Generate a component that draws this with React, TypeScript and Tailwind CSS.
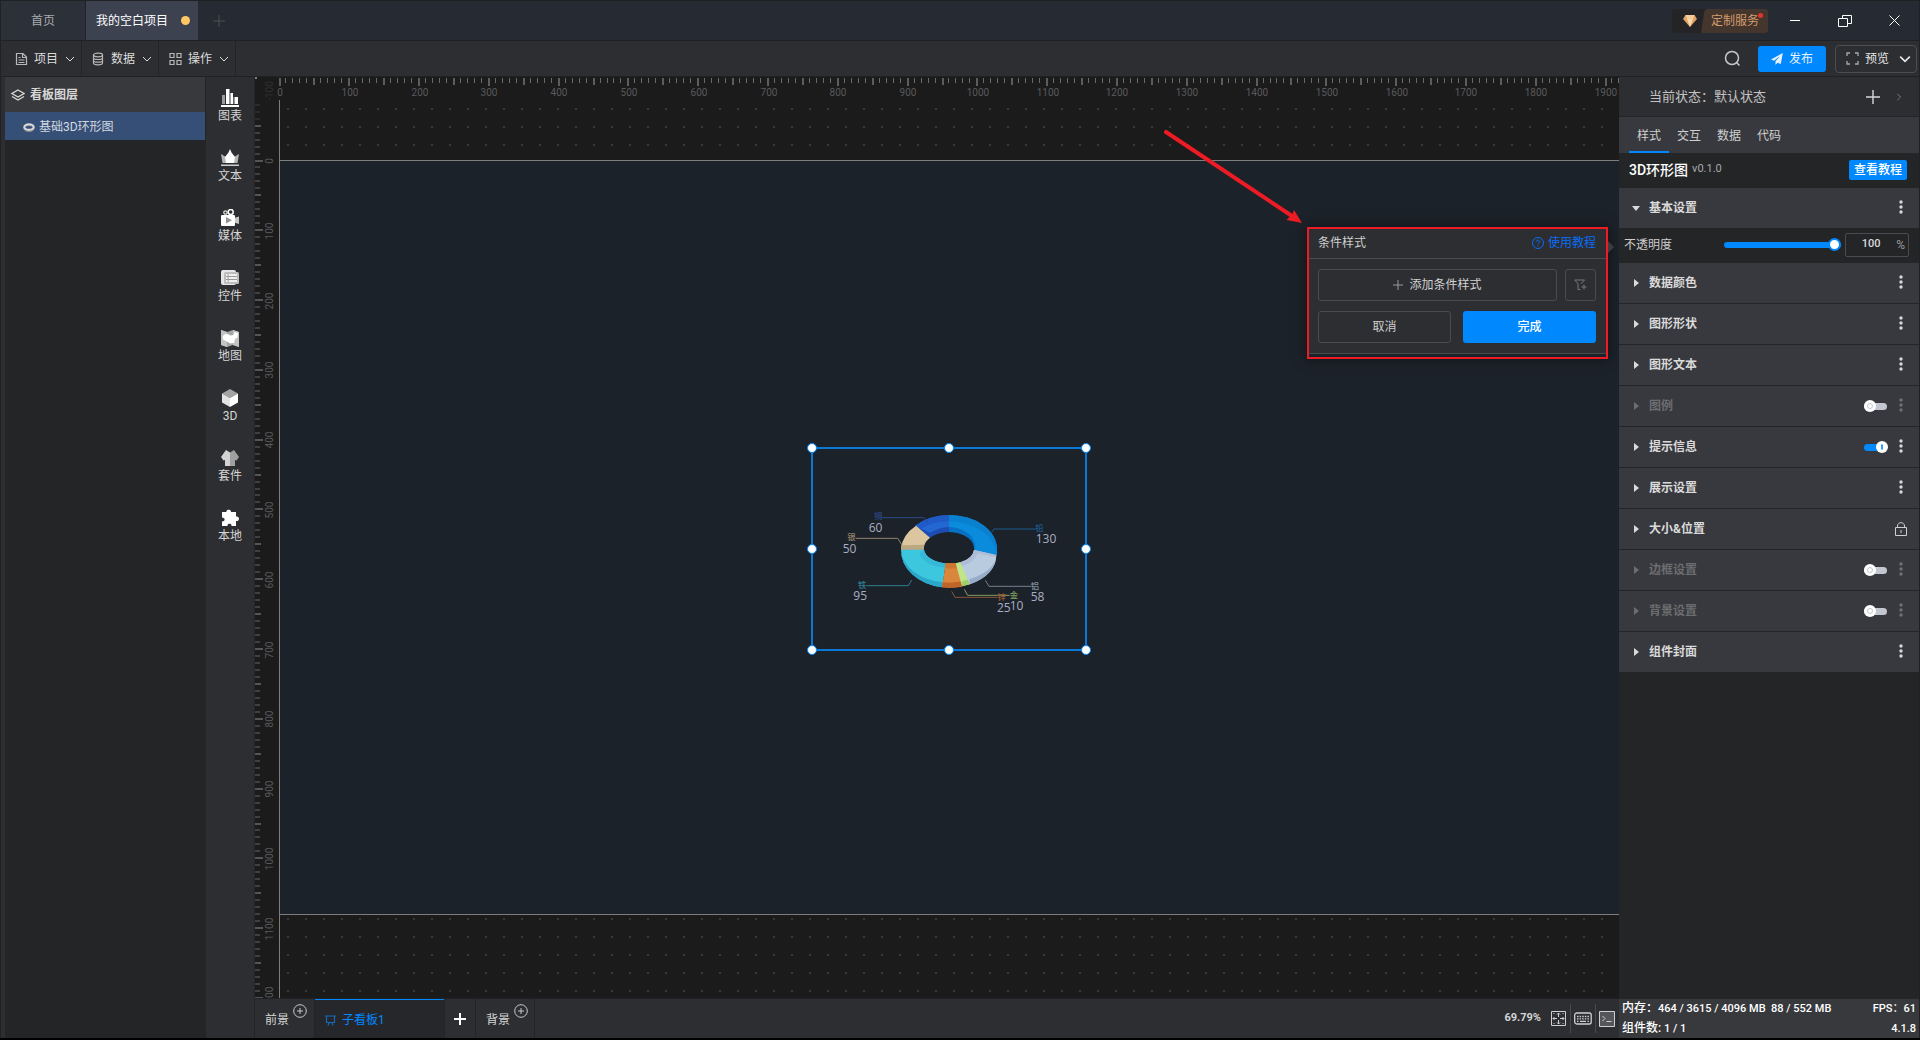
import { useState } from 'react';
import type { ReactNode } from 'react';
import { clsx } from 'clsx';

const STEP = 6.979;

function Chevron({ className, size = 10, width = 1 }: { className?: string; size?: number; width?: number }) {
	return (
		<svg className={className} width={size} height={size} viewBox="0 0 10 10" fill="none" stroke="currentColor" strokeWidth={width}>
			<path d="M1 3l4 4 4-4" />
		</svg>
	);
}

function PlusIcon({ size, width = 1, className }: { size: number; width?: number; className?: string }) {
	return (
		<svg className={className} width={size} height={size} viewBox={`0 0 ${size} ${size}`} stroke="currentColor" strokeWidth={width}>
			<path d={`M0 ${size / 2}H${size}M${size / 2} 0V${size}`} />
		</svg>
	);
}

function TitleBar() {
	return (
		<header className="flex h-10 shrink-0 items-stretch border-t border-[#202124] bg-[#262b33] text-xs">
			<button type="button" className="w-[85px] border-r border-[#202124] bg-[#2c3038] pl-[30px] text-left text-[#a9abae]">
				首页
			</button>
			<button type="button" className="flex w-28 items-center justify-between bg-[#3d4250] pr-2 pl-2.5 text-white">
				我的空白项目
				<span className="size-[9px] rounded-full bg-[#ffc864]" />
			</button>
			<button type="button" aria-label="新建" className="ml-[15px] text-[#4a4e55]">
				<PlusIcon size={12} />
			</button>
			<div className="ml-auto flex items-center">
				<button type="button" className="relative flex h-6 w-24 items-center overflow-hidden rounded-[3px] bg-[#242426]">
					<svg width="36" height="24" viewBox="0 0 36 24">
						<path d="M36 0h-1q-2 0-3 4l-3 20h7z" fill="#45362d" />
						<path d="M13.500 6h9l2.500 4-7 8-7-8z" fill="#dfa468" />
						<path d="M13.500 6h9l-1.500 4h-6z" fill="#f5cb9a" />
						<path d="M15 10h6l-3 8z" fill="#fbd7a9" />
					</svg>
					<span className="h-6 flex-1 bg-[#45362d] pl-[3px] text-left leading-6 text-[#d39c6e]">定制服务</span>
					<span className="absolute top-1 right-[5px] size-[5px] rounded-full bg-[#e03434]" />
				</button>
				<button type="button" aria-label="最小化" className="flex h-10 w-[53px] items-center justify-center text-white">
					<svg width="10" height="12" viewBox="0 0 10 12" stroke="currentColor">
						<path d="M0 5.500h10" />
					</svg>
				</button>
				<button type="button" aria-label="还原" className="flex h-10 w-12 items-center justify-center text-white">
					<svg width="14" height="12" viewBox="0 0 14 12" fill="none" stroke="currentColor">
						<path d="M.5 3.500h9v8h-9zM4.500 3.500v-3h9v8h-4" />
					</svg>
				</button>
				<button type="button" aria-label="关闭" className="flex h-10 w-[50px] items-center justify-center text-white">
					<svg width="11" height="11" viewBox="0 0 11 11" fill="none" stroke="currentColor">
						<path d="M.5.5l10 10M10.500.5l-10 10" />
					</svg>
				</button>
			</div>
		</header>
	);
}

function MenuButton({ label, children }: { label: string; children: ReactNode }) {
	return (
		<button type="button" className="flex w-[77px] items-center border-r border-[#232427] pl-2.5 text-[#dcdcdc]">
			<svg width="13" height="14" viewBox="0 0 13 14" fill="none" stroke="#b8b8b8" strokeWidth="1.200">
				{children}
			</svg>
			<span className="ml-1.5">{label}</span>
			<Chevron className="ml-[7px]" />
		</button>
	);
}

function Toolbar() {
	return (
		<div className="flex h-9 shrink-0 items-stretch border-t border-[#202124] bg-[#2d2e32] pl-1 text-xs">
			<MenuButton label="项目">
				<path d="M1.500 1.500h6.500l3.500 3.500v7.500h-10zM7.500 1.500v4h4M3.500 5.500h2M3.500 8h6M3.500 10.500h6" />
			</MenuButton>
			<MenuButton label="数据">
				<ellipse cx="6" cy="3" rx="4.500" ry="1.800" />
				<path d="M1.500 3v8c0 2.400 9 2.400 9 0V3M1.500 5.700c0 2.400 9 2.400 9 0M1.500 8.400c0 2.400 9 2.400 9 0" />
			</MenuButton>
			<MenuButton label="操作">
				<path d="M1 1.500h4v4H1zM8 1.500h4v4H8zM1 8.500h4v4H1zM8 8.500h4v4H8z" />
			</MenuButton>
			<div className="ml-auto flex items-center pr-0.5">
				<button type="button" aria-label="搜索" className="mr-[17px] text-[#c8c8c8]">
					<svg width="17" height="17" viewBox="0 0 17 17" fill="none" stroke="currentColor" strokeWidth="1.500">
						<circle cx="8" cy="8" r="6.500" />
						<path d="M12.500 12.500l3 3" />
					</svg>
				</button>
				<button type="button" className="flex h-[26px] w-[68px] items-center justify-center gap-1.5 rounded-[3px] bg-[#0088ff] text-[#e6f2ff]">
					<svg width="12" height="12" viewBox="0 0 12 12" fill="currentColor">
						<path d="M11.800 0L0 6.400l3 1.300L9 3 4.500 8.200V12l2-2.300 3.300 1.400z" />
					</svg>
					发布
				</button>
				<button type="button" className="ml-[9px] flex h-7 w-[82px] items-center rounded border border-[#4c4d50] pl-2.5 text-[#e6e6e6]">
					<svg width="13" height="13" viewBox="0 0 13 13" fill="none" stroke="#a9a9a9" strokeWidth="1.300">
						<path d="M1 4V1h3M9 1h3v3M12 9v3H9M4 12H1V9" />
					</svg>
					<span className="ml-1.5">预览</span>
					<Chevron className="ml-2.5" size={12} width={1.4} />
				</button>
			</div>
		</div>
	);
}

function LayerPanel() {
	return (
		<aside className="ml-1 w-[200px] shrink-0 bg-[#242527] text-xs">
			<h2 className="flex h-[35px] items-center bg-[#38393d] pl-1.5 font-bold text-[#d8d8d8]">
				<svg width="14" height="12" viewBox="0 0 14 12" fill="none" stroke="currentColor" strokeWidth="1.300">
					<path d="M7 1l6 3.500-6 3.500-6-3.500zM1 7.500L7 11l6-3.500" />
				</svg>
				<span className="ml-[5px]">看板图层</span>
			</h2>
			<button type="button" className="flex h-7 w-full items-center gap-1 bg-[#364f76] pt-0.5 pl-[18px] text-[#d3d8e0]">
				<svg width="12" height="9" viewBox="0 0 12 9">
					<ellipse cx="6" cy="5" rx="4.700" ry="3" fill="none" stroke="#8d8d92" strokeWidth="2" />
					<ellipse cx="6" cy="4" rx="4.700" ry="2.800" fill="none" stroke="#d8d8dc" strokeWidth="2" />
				</svg>
				<span>基础3D环形图</span>
			</button>
		</aside>
	);
}

const tools: { label: string; icon: ReactNode }[] = [
	{
		label: '图表',
		icon: (
			<>
				<path d="M1 6h3v9H1zM9 4h3v11H9z" fill="#9b9b9b" />
				<path d="M5 0h3.500v15H5zM10 4h2v11h-2zM14 8h3v7h-3z" fill="#fff" />
				<path d="M12.500 8H14v7h-1.500z" fill="#9b9b9b" />
				<path d="M0 16h18v2H0z" fill="#fff" />
			</>
		),
	},
	{
		label: '文本',
		icon: (
			<>
				<path d="M0 5l5 3 8 0 5-3-1.500 9h-15z" fill="#b5b5b5" />
				<path d="M9 0l1.500 3.500L14 8l-1 6H5L4 8l3.500-4.500z" fill="#fff" />
				<path d="M0 15.500h18V17H0z" fill="#cfcfcf" />
			</>
		),
	},
	{
		label: '媒体',
		icon: (
			<>
				<circle cx="4.500" cy="3.500" r="1.700" fill="none" stroke="#ddd" strokeWidth="1.300" />
				<circle cx="9.700" cy="3" r="2.500" fill="none" stroke="#fff" strokeWidth="1.500" />
				<path d="M13 9l5-1.500V15l-5-1.500z" fill="#c5c5c5" />
				<rect y="6" width="14" height="11" rx="1" fill="#fff" />
				<path d="M5 8l6 3.200L5 14.500z" fill="#949494" />
			</>
		),
	},
	{
		label: '控件',
		icon: (
			<>
				<rect x="0" y="1" width="15" height="15" rx="2" fill="#e6e6e6" />
				<rect x="3" y="3" width="15" height="12" rx="1.500" fill="#bdbdbd" />
				<path d="M5 6h1.500M5 9h1.500M5 12h1.500M8 6h8M8 9h8M8 12h8" stroke="#fff" strokeWidth="1.300" />
				<path d="M5 7.500h11M5 10.500h11" stroke="#8b8b8b" strokeWidth=".7" />
			</>
		),
	},
	{
		label: '地图',
		icon: (
			<>
				<path d="M0 1l6 2 6-2 6 2v15l-6-2-6 2-6-2z" fill="#a6a6a6" />
				<path d="M0 1l6 2v15l-6-2zM12 1l6 2v15l-6-2z" fill="#c4c4c4" />
				<path d="M1.500 8l1.500-2.500 4-.5 2.500 1.500 3-.5 1-3 3.500 1-.5 4.500-2.500 1.500-1 4-4 .5-3-2-3.500-1.500z" fill="#fff" />
			</>
		),
	},
	{
		label: '3D',
		icon: (
			<>
				<path d="M9 0l8 4.500L9 9 1 4.500z" fill="#a3a3a3" />
				<path d="M1 4.500L9 9v9l-8-4.500z" fill="#e3e3e3" />
				<path d="M17 4.500L9 9v9l8-4.500z" fill="#fff" />
			</>
		),
	},
	{
		label: '套件',
		icon: (
			<>
				<path d="M5 1l4 2.500V17H4v-6l-1.500.5L0 8z" fill="#d2d2d2" />
				<path d="M13 1L9 3.500V17h5v-6l1.500.5L18 8z" fill="#a0a0a0" />
			</>
		),
	},
	{
		label: '本地',
		icon: (
			<path
				d="M1 3h4.500C4.500 0 10.500 0 10 3h5v4.500c4-1 4 5.500 0 4.500V17h-4.500c.5-3-4.500-3-4 0H1v-4.500c3.500 0 3.500-4 0-4z"
				fill="#fff"
			/>
		),
	},
];

function ToolRail() {
	return (
		<nav className="flex w-[50px] shrink-0 flex-col border-x border-[#242527] bg-[#2d2e32]">
			{tools.map((tool) => (
				<button key={tool.label} type="button" className="flex h-[60px] shrink-0 flex-col items-center pt-3 text-xs leading-[18px] text-[#d5d5d5]">
					<svg width="18" height="18" viewBox="0 0 18 18">
						{tool.icon}
					</svg>
					{tool.label}
				</button>
			))}
		</nav>
	);
}

function range(from: number, to: number) {
	return Array.from({ length: to - from + 1 }, (_, i) => from + i);
}

function TopRuler() {
	return (
		<svg className="h-[23px] w-full overflow-hidden" aria-hidden="true">
			<rect width="2" height="2" fill="#7d7d7e" />
			{range(0, 192).map((i) => {
				const major = i % 10 === 0;
				const mid = i % 5 === 0;
				return (
					<g key={i}>
						<rect
							x={Math.floor(i * STEP) + 24}
							y="1"
							width={mid ? 2 : 1}
							height={major ? 8 : mid ? 7 : 5}
							fill={mid ? '#5c5c5d' : '#6a6a6b'}
						/>
						{major && (
							<text x={Math.round(i * STEP) + 25} y="19" fontSize="10" textAnchor="middle" fill="#5a5a5b">
								{i * 10}
							</text>
						)}
					</g>
				);
			})}
		</svg>
	);
}

function LeftRuler() {
	return (
		<svg className="-mt-[23px] w-6 shrink-0 overflow-hidden" aria-hidden="true">
			{range(-8, 122).map((i) => (
				<rect
					key={i}
					x="0"
					y={Math.floor(i * STEP) + 83}
					width={i % 10 === 0 ? 8 : i % 5 === 0 ? 6 : 5}
					height="2"
					fill={i < -5 ? '#2b2b2c' : i % 5 === 0 ? '#555556' : '#404041'}
				/>
			))}
			{range(-1, 12).map((n) => (
				<text
					key={n}
					transform={`translate(18 ${Math.round(n * 10 * STEP) + 84}) rotate(-90)`}
					fontSize="10"
					textAnchor="middle"
					fill={n < 0 ? '#303031' : '#5a5a5b'}
				>
					{n * 100}
				</text>
			))}
		</svg>
	);
}

function DonutChart() {
	return (
		<svg className="absolute -inset-0.5" width="276" height="204" viewBox="63 51 828 612" role="img" aria-label="3D环形图">
			<g>
				<path d="M477 255A144 102 0 0 1 621 357V375L552 364A75 50 0 0 0 477 306z" fill="#0b8bdb" />
				<path d="M477 255A144 102 0 0 1 621 357L619 373A144 102 0 0 0 477 274z" fill="#0a80d0" />
				<path d="M477 291A82 58 0 0 1 555 350L552 364A75 50 0 0 0 477 306z" fill="#0670c4" />
				<path d="M375 287A144 102 0 0 1 477 255V306A75 50 0 0 0 419 323z" fill="#2367d3" />
				<path d="M380 285A144 102 0 0 1 477 255V274A130 90 0 0 0 392 296z" fill="#205ac7" />
				<path d="M375 287L419 323A75 50 0 0 1 477 306V291A90 60 0 0 0 421 308L380 290z" fill="#1d4cb4" />
				<path d="M333 357A144 102 0 0 1 378 287L420 323A75 50 0 0 0 402 349L401 359H334z" fill="#dcc6a0" />
				<path d="M333 346L403 344 401 359H334z" fill="#bca783" />
				<path d="M333 359H402A75 46 0 0 0 467 400L457 472A144 112 0 0 1 333 359z" fill="#3cc7df" />
				<path d="M333 359A144 102 0 0 0 459 457L456 472A144 112 0 0 1 333 359z" fill="#2ba8c9" />
				<path d="M402 359A75 46 0 0 0 467 400L465 413A85 56 0 0 1 388 372z" fill="#35b9d6" />
				<path d="M467 400H497L517 457 516 470Q486 475 456 472z" fill="#db863d" />
				<path d="M458 457Q488 460 516 454V469Q486 475 456 472z" fill="#c06428" />
				<path d="M467 400H497L501 414Q482 418 465 414z" fill="#cf7730" />
				<path d="M497 400L511 396 540 450 539 463 516 469z" fill="#bfe489" />
				<path d="M516 454L538 448 540 463 516 469z" fill="#9fcf68" />
				<path d="M552 360L619 375Q619 434 539 463L511 397Q548 386 552 360z" fill="#b9cbdf" />
				<path d="M620 372Q618 422 538 448L540 463Q612 438 620 376z" fill="#97acc9" />
				<path d="M552 360L619 375 617 382 562 370Q556 396 517 408L511 397Q548 386 552 360z" fill="#adbdd6" />
			</g>
			<g fill="none" strokeWidth="3">
				<path d="M411 275L402 263H276" stroke="#2b4a85" />
				<path d="M336 345L323 325H197" stroke="#94836b" />
				<path d="M365 450L355 467H229" stroke="#307d92" />
				<path d="M605 306L612 297H738" stroke="#1a5b8f" />
				<path d="M586 451L597 469H723" stroke="#74808f" />
				<path d="M523 478L533 496H659" stroke="#7d9d5e" />
				<path d="M485 484L495 502H622" stroke="#8a5538" />
			</g>
			<g fontSize="25" fontWeight="500">
				<text x="252" y="268" fill="#2b4a85">铜</text>
				<text x="172" y="331" fill="#94836b">银</text>
				<text x="204" y="474" fill="#307d92">铁</text>
				<text x="736" y="303" fill="#1a5b8f">铅</text>
				<text x="722" y="476" fill="#8490a0">铝</text>
				<text x="622" y="509" fill="#a05c35">锌</text>
				<text x="659" y="504" fill="#7d9d5e">金</text>
			</g>
			<g fontSize="36" fill="#a9aec4" className="font-['Open_Sans','Noto_Sans',sans-serif]">
				<text x="236" y="305">60</text>
				<text x="158" y="368">50</text>
				<text x="190" y="510">95</text>
				<text x="737" y="340">130</text>
				<text x="722" y="513">58</text>
				<text x="621" y="546">25</text>
				<text x="659" y="540">10</text>
			</g>
		</svg>
	);
}

const handles = [
	'-left-[6px] -top-[6px]',
	'left-1/2 -ml-[5px] -top-[6px]',
	'-right-[6px] -top-[6px]',
	'-left-[6px] top-1/2 -mt-[5px]',
	'-right-[6px] top-1/2 -mt-[5px]',
	'-left-[6px] -bottom-[6px]',
	'left-1/2 -ml-[5px] -bottom-[6px]',
	'-right-[6px] -bottom-[6px]',
];

function ConditionPopup() {
	return (
		<section className="absolute top-[127px] right-[11px] w-[301px] border-2 border-[#ed1c24] pb-[3px] text-xs shadow-[0_0_12px_rgba(0,0,0,0.5)]">
			<div className="absolute top-3 -right-2 border-y-[6px] border-l-[6px] border-y-transparent border-l-[#3c3d41]" />
			<div className="border-b border-[#4a4b4e] bg-[#2d2e32] pb-2.5">
				<div className="flex h-[30px] items-center justify-between border-b border-[#4a4b4e] pr-2.5 pb-0.5 pl-[9px]">
					<h3 className="text-[#cfcfcf]">条件样式</h3>
					<a href="#help" className="flex items-center gap-1 text-[#0a6cf5]">
						<svg width="12" height="12" viewBox="0 0 12 12" fill="none" stroke="currentColor">
							<circle cx="6" cy="6" r="5.500" />
							<path d="M4.300 4.800C4.300 2.600 7.700 2.600 7.700 4.700 7.700 6 6 5.900 6 7.300M6 8.300v1.100" />
						</svg>
						使用教程
					</a>
				</div>
				<div className="flex flex-col gap-2.5 pt-2.5 pr-2.5 pl-[9px]">
					<div className="flex gap-2">
						<button type="button" className="flex h-8 flex-1 items-center justify-center gap-1.5 rounded-[3px] border border-[#4a4b4e] text-[#d2d2d2]">
							<PlusIcon size={10} className="text-[#9a9a9a]" />
							添加条件样式
						</button>
						<button type="button" aria-label="筛选" className="flex h-8 w-[31px] items-center justify-center rounded-[3px] border border-[#4a4b4e] text-[#77787b]">
							<svg width="13" height="12" viewBox="0 0 13 12" fill="none" stroke="currentColor">
								<path d="M.8 1h9.700L7 4.800M.8 1L4 4.800V10.500h2.500M7.500 8h5M10 5.500v5" />
							</svg>
						</button>
					</div>
					<div className="grid grid-cols-2 gap-3">
						<button type="button" className="h-8 rounded-[3px] border border-[#4a4b4e] text-[#cfcfcf]">
							取消
						</button>
						<button type="button" className="h-8 rounded-[3px] bg-[#0088ff] font-medium text-white">
							完成
						</button>
					</div>
				</div>
			</div>
		</section>
	);
}

function Canvas() {
	return (
		<div className="flex min-h-0 flex-1 flex-col bg-[#1b1b1c]">
			<TopRuler />
			<div className="flex min-h-0 flex-1">
				<LeftRuler />
				<div className="relative flex-1 overflow-hidden border-l border-[#7d7d7e] bg-[radial-gradient(#39393a_1px,transparent_1px)] bg-size-[18px_18px] bg-origin-border">
					<div className="absolute inset-x-0 top-[60px] h-[755px] border-y border-[#7d7d7e] bg-[#1c222a]" />
					<div className="absolute top-[347px] left-[531px] h-[204px] w-[276px] border-2 border-[#0a78d6]">
						<DonutChart />
						{handles.map((place) => (
							<span key={place} className={clsx('absolute size-2.5 rounded-full border border-[#0088ff] bg-white', place)} />
						))}
					</div>
					<svg className="absolute top-[30px] right-[316px]" width="140" height="94" viewBox="0 0 140 94" aria-hidden="true">
						<path d="M3 2L129 86" stroke="#ed1c24" strokeWidth="4" strokeLinecap="round" />
						<path d="M139 93L131 80 129.500 84 123.500 90z" fill="#ed1c24" />
					</svg>
					<ConditionPopup />
				</div>
			</div>
		</div>
	);
}

function AddBadge({ label }: { label: string }) {
	return (
		<button type="button" aria-label={label} className="mb-4 text-[#c9c9c9]">
			<svg width="14" height="14" viewBox="0 0 14 14" fill="none" stroke="currentColor">
				<circle cx="7" cy="7" r="6.300" />
				<path d="M4 7h6M7 4v6" />
			</svg>
		</button>
	);
}

function BottomBar() {
	return (
		<footer className="flex h-10 shrink-0 items-stretch border-t border-[#202124] bg-[#2d2e32] text-xs text-[#d5d5d5]">
			<div className="flex w-[60px] items-center gap-1 border-r border-[#232427] pl-2.5">
				<span className="pt-0.5">前景</span>
				<AddBadge label="添加前景" />
			</div>
			<button type="button" className="flex w-[129px] items-center gap-1.5 border-t border-[#0088ff] bg-[#26272b] pt-0.5 pl-2.5 text-[#0088ff]">
				<svg width="11" height="11" viewBox="0 0 11 11" fill="none" stroke="#1668b8" strokeWidth="1.200">
					<path d="M0 1h11M1.500 1v6.500h8V1M4 8l-1 2.500M7 8l1 2.500" />
				</svg>
				子看板1
			</button>
			<button type="button" aria-label="添加看板" className="flex w-8 items-center justify-center border-x border-[#232427] text-white">
				<PlusIcon size={12} width={2} />
			</button>
			<div className="flex w-[59px] items-center gap-1 border-r border-[#232427] pl-2.5">
				<span className="pt-0.5">背景</span>
				<AddBadge label="添加背景" />
			</div>
			<div className="ml-auto flex items-center pr-1">
				<span className="mr-2.5 text-[11px] font-bold">69.79%</span>
				<button type="button" aria-label="适应画布" className="mr-1">
					<svg width="15" height="15" viewBox="0 0 15 15" fill="none" stroke="#cfcfcf">
						<path d="M.5.5h14v14H.5z" />
						<path d="M7.500 2v4M7.500 9v4M2 7.500h4M9 7.500h4M6 3.500l1.500-1.500L9 3.500M6 11.500L7.500 13 9 11.500M3.500 6L2 7.500 3.500 9M11.500 6L13 7.500 11.500 9" />
						<path d="M2.500 2.500h1M11.500 2.500h1M2.500 12.500h1M11.500 12.500h1" />
					</svg>
				</button>
				<button type="button" aria-label="快捷键" className="border-x border-[#48494d] px-[3px] py-2">
					<svg width="18" height="13" viewBox="0 0 18 13" fill="none" stroke="#cfcfcf" strokeWidth="1.300">
						<rect x=".7" y="1" width="16.500" height="11" rx="2" />
						<path d="M3 4.500h12" strokeDasharray="1.500 1.100" />
						<path d="M3 6.800h12" strokeDasharray="1.500 1.100" />
						<path d="M3 9.300h1.500M6 9.300h6M13.500 9.300H15" />
					</svg>
				</button>
				<button type="button" aria-label="控制台" className="ml-[3px]">
					<svg width="16" height="16" viewBox="0 0 16 16" fill="#55565a" stroke="#cfcfcf">
						<path d="M.5.5h15v15H.5z" />
						<path d="M3.500 5L6 7.500 3.500 10M7.500 10.500h5" fill="none" />
					</svg>
				</button>
			</div>
		</footer>
	);
}

function MoreButton({ dim, label }: { dim?: boolean; label: string }) {
	return (
		<button type="button" aria-label={`${label}更多`} className={clsx('w-3', dim ? 'text-[#6f7073]' : 'text-[#d8d8d8]')}>
			<svg className="mx-auto" width="4" height="16" viewBox="0 0 4 16" fill="currentColor">
				<circle cx="2" cy="2" r="1.700" />
				<circle cx="2" cy="7" r="1.700" />
				<circle cx="2" cy="12" r="1.700" />
			</svg>
		</button>
	);
}

function Toggle({ label, on }: { label: string; on: boolean }) {
	const [checked, setChecked] = useState(on);
	return (
		<input
			type="checkbox"
			aria-label={label}
			checked={checked}
			onChange={(event) => setChecked(event.target.checked)}
			className="relative mr-2 h-[7px] w-[23px] appearance-none rounded-full bg-[#c3c7d0] before:absolute before:-top-[3px] before:left-0 before:size-3 before:rounded-full before:bg-white after:absolute after:top-0 after:left-[3px] after:size-1.5 after:rounded-full after:border after:border-[#c3c7d0] checked:bg-[#0088ff] checked:before:left-3 checked:after:left-[17px] checked:after:w-0.5 checked:after:border-[#3399ff]"
		/>
	);
}

interface Section {
	label: string;
	toggle?: boolean;
	lock?: boolean;
}

const sections: Section[] = [
	{ label: '数据颜色' },
	{ label: '图形形状' },
	{ label: '图形文本' },
	{ label: '图例', toggle: false },
	{ label: '提示信息', toggle: true },
	{ label: '展示设置' },
	{ label: '大小&位置', lock: true },
	{ label: '边框设置', toggle: false },
	{ label: '背景设置', toggle: false },
	{ label: '组件封面' },
];

function SectionRow({ section, open }: { section: Section; open?: boolean }) {
	const dim = section.toggle === false;
	return (
		<div className="flex h-10 shrink-0 items-center bg-[#38393e] pr-3">
			<button
				type="button"
				aria-expanded={open ?? false}
				className={clsx('flex flex-1 items-center pl-3 text-left font-bold', dim ? 'text-[#6c6d70]' : 'text-[#dadada]')}
			>
				<svg className={clsx('mr-2', open && 'rotate-90')} width="10" height="10" viewBox="0 0 10 10" fill="currentColor">
					<path d="M3 1l5 4-5 4z" />
				</svg>
				{section.label}
			</button>
			{section.toggle !== undefined && <Toggle label={section.label} on={section.toggle} />}
			{section.lock ? (
				<button type="button" aria-label="锁定比例">
					<svg width="12" height="14" viewBox="0 0 12 14" fill="none" stroke="#cfcfcf">
						<path d="M.5 5.500h11v8H.5zM2.500 5.500V4c0-4.500 7-4.500 7 0v1.500M6 8v3" />
					</svg>
				</button>
			) : (
				<MoreButton dim={dim} label={section.label} />
			)}
		</div>
	);
}

function Inspector() {
	const [opacity, setOpacity] = useState(100);
	return (
		<aside className="flex w-[300px] shrink-0 flex-col bg-[#242527] text-xs">
			<div className="flex h-10 shrink-0 items-center border-b border-[#242527] bg-[#2d2e32] pr-4 pl-[30px] text-[13px] text-[#c3c3c3]">
				<span>当前状态：默认状态</span>
				<button type="button" aria-label="添加状态" className="ml-auto text-[#d8d8d8]">
					<PlusIcon size={14} width={1.4} />
				</button>
				<Chevron className="ml-[15px] -rotate-90 text-[#8b8b8b]" size={8} />
			</div>
			<div role="tablist" className="flex h-9 shrink-0 bg-[#38393e] pl-2.5 text-[#d0d0d0]">
				{['样式', '交互', '数据', '代码'].map((tab, i) => (
					<button
						key={tab}
						type="button"
						role="tab"
						aria-selected={i === 0}
						className={clsx('w-10 border-b-2 pt-1', i === 0 ? 'border-[#0088ff]' : 'border-transparent')}
					>
						{tab}
					</button>
				))}
			</div>
			<div className="flex h-[35px] shrink-0 items-center pr-3 pb-0.5 pl-2.5">
				<h2 className="text-sm font-medium text-white">3D环形图</h2>
				<span className="ml-1 text-[11px] text-[#a9a9a9]">v0.1.0</span>
				<a href="#tutorial" className="ml-auto h-5 rounded-[2px] bg-[#0088ff] px-[5px] leading-5 font-medium text-white">
					查看教程
				</a>
			</div>
			<SectionRow section={{ label: '基本设置' }} open />
			<div className="flex h-[35px] shrink-0 items-center pr-2.5 pb-0.5 pl-[5px] text-[#cdcdcd]">
				<label htmlFor="opacity">不透明度</label>
				<input
					id="opacity"
					type="range"
					value={opacity}
					onChange={(event) => setOpacity(Number(event.target.value))}
					className="ml-auto h-1.5 w-[117px] appearance-none rounded-full bg-[#0088ff] [&::-webkit-slider-thumb]:size-[13px] [&::-webkit-slider-thumb]:appearance-none [&::-webkit-slider-thumb]:rounded-full [&::-webkit-slider-thumb]:border-2 [&::-webkit-slider-thumb]:border-[#0088ff] [&::-webkit-slider-thumb]:bg-white"
				/>
				<div className="ml-1 flex h-6 w-16 items-center rounded-[2px] border border-[#4a4b4e] pr-[3px]">
					<input
						aria-label="不透明度数值"
						value={opacity}
						onChange={(event) => setOpacity(Number(event.target.value))}
						className="w-0 flex-1 text-center text-[11px] font-medium text-[#dcdcdc]"
					/>
					<span className="text-[#9a9a9c]">%</span>
				</div>
			</div>
			<div className="flex flex-col gap-px">
				{sections.map((section) => (
					<SectionRow key={section.label} section={section} />
				))}
			</div>
			<div className="mt-auto flex h-[39px] shrink-0 flex-col justify-between bg-[#38393d] px-[3px] text-[11px] leading-[19px] font-medium text-white">
				<div className="flex justify-between">
					<span className="whitespace-pre">
						<span className="text-xs">内存：</span>464 / 3615 / 4096 MB  88 / 552 MB
					</span>
					<span>FPS：61</span>
				</div>
				<div className="flex justify-between">
					<span>
						<span className="text-xs">组件数:</span> 1 / 1
					</span>
					<span>4.1.8</span>
				</div>
			</div>
		</aside>
	);
}

export default function App() {
	return (
		<div className="flex h-screen flex-col overflow-hidden border-b-2 border-black bg-[#2d2e32] font-['Roboto','Noto_Sans_CJK_SC',sans-serif]">
			<div className="flex min-h-0 flex-1 flex-col border-x border-[#202124]">
				<TitleBar />
				<Toolbar />
				<div className="flex min-h-0 flex-1 border-t border-[#202124]">
					<LayerPanel />
					<ToolRail />
					<main className="flex min-w-0 flex-1 flex-col">
						<Canvas />
						<BottomBar />
					</main>
					<Inspector />
				</div>
			</div>
		</div>
	);
}
